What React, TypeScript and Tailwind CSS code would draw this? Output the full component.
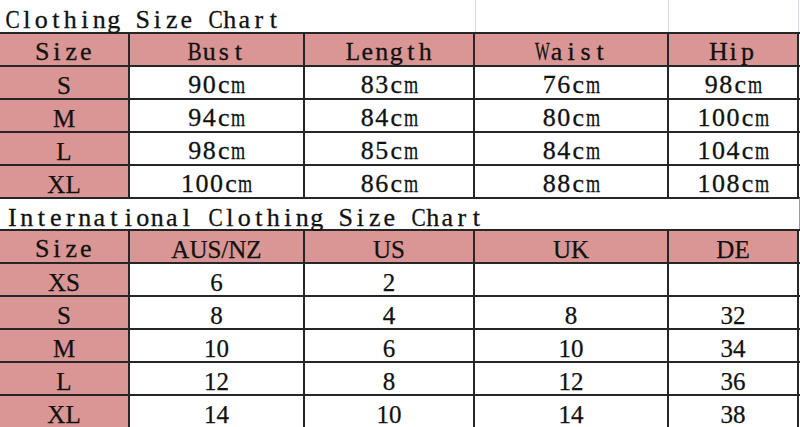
import React from "react";

const serif = "font-['Liberation_Serif',serif] text-[25px] [-webkit-text-stroke:0.25px_#111]";

const cols = "grid grid-cols-[130px_175px_170px_194px_130px]";

// wide letters get narrowed so the text keeps a fixed pitch, like a CJK system font
const squeeze: Record<string, string> = {
  m: "scale-x-[0.7]",
  w: "scale-x-[0.75]",
  W: "scale-x-[0.6]",
  C: "scale-x-[0.82]",
  B: "scale-x-[0.82]",
  L: "scale-x-[0.9]",
};

const Fixed = ({ text }: { text: string }) => {
  return (
    <span className="inline-flex whitespace-nowrap font-['Liberation_Serif',serif] text-[26px] leading-none text-[#111] [-webkit-text-stroke:0.3px_#111]">
      {text.split("").map((ch, i) => (
        <span key={i} className="inline-flex w-[14.5px] justify-center">
          <span className={`inline-block ${squeeze[ch] ?? ""}`}>{ch === " " ? "\u00a0" : ch}</span>
        </span>
      ))}
    </span>
  );
};

type Cell = { text: string; fixed?: boolean };

const Row = ({ cells, header }: { cells: Cell[]; header?: boolean }) => {
  return (
    <div className={`${cols} h-[33px] border-t-2 border-[#262626]`}>
      {cells.map((c, i) => (
        <div
          key={i}
          className={`flex items-center justify-center pt-[5px] border-r-2 border-[#262626] ${
            header || i === 0 ? "bg-[#d99694]" : "bg-white"
          }`}
        >
          {c.fixed ? (
            <Fixed text={c.text} />
          ) : (
            <span className={`inline-block leading-none text-[#111] ${serif}`}>{c.text}</span>
          )}
        </div>
      ))}
    </div>
  );
};

const sizeChart = [
  ["S", "90cm", "83cm", "76cm", "98cm"],
  ["M", "94cm", "84cm", "80cm", "100cm"],
  ["L", "98cm", "85cm", "84cm", "104cm"],
  ["XL", "100cm", "86cm", "88cm", "108cm"],
];

const intlChart = [
  ["XS", "6", "2", "", ""],
  ["S", "8", "4", "8", "32"],
  ["M", "10", "6", "10", "34"],
  ["L", "12", "8", "12", "36"],
  ["XL", "14", "10", "14", "38"],
];

export default function App() {
  return (
    <div className="w-[800px] h-[427px] overflow-hidden bg-white">
      {/* first title row, with faint sheet gridlines */}
      <div className={`${cols} h-[32px]`}>
        <div className="col-span-3 relative">
          <span className="absolute left-[5px] top-[7px]">
            <Fixed text="Clothing Size Chart" />
          </span>
        </div>
        <div className="border-l border-r border-[#d6d9e6]" />
        <div className="border-r border-[#d6d9e6]" />
      </div>
      <Row
        header
        cells={["Size", "Bust", "Length", "Waist", "Hip"].map((t) => ({ text: t, fixed: true }))}
      />
      {sizeChart.map((r) => (
        <Row key={r[0]} cells={r.map((t, i) => ({ text: t, fixed: i > 0 }))} />
      ))}
      <div className="h-[32px] border-t-2 border-[#262626] border-r border-r-[#9a9a9a] pl-[5px] pt-[6px]">
        <Fixed text="International Clothing Size Chart" />
      </div>
      <Row
        header
        cells={[
          { text: "Size", fixed: true },
          { text: "AUS/NZ" },
          { text: "US" },
          { text: "UK" },
          { text: "DE" },
        ]}
      />
      {intlChart.map((r) => (
        <Row key={r[0]} cells={r.map((t) => ({ text: t }))} />
      ))}
    </div>
  );
}
